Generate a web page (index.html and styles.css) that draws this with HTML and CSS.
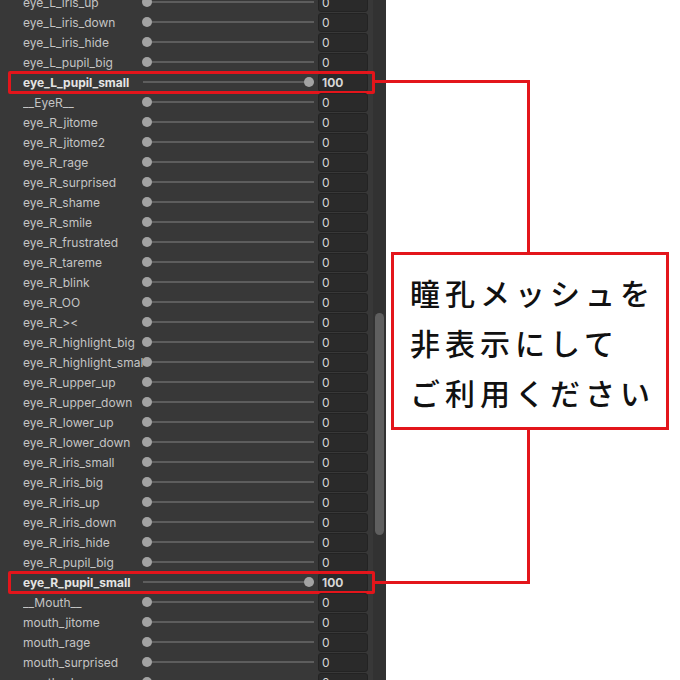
FILE: index.html
```html
<!DOCTYPE html>
<html lang="ja">
<head>
  <meta charset="UTF-8">
  <title>BlendShapes</title>
  <link rel="stylesheet" href="styles.css">
</head>
<body>
  <div class="page">
    <div class="panel">
      <div class="list" id="list"></div>
      <div class="scrollbar"><div class="thumb"></div></div>
    </div>
    <div class="blank"></div>
  </div>

  <div class="note">
    <div class="line line-top-h"></div>
    <div class="line line-top-v"></div>
    <div class="callout">瞳孔メッシュを<br>非表示にして<br>ご利用ください</div>
    <div class="line line-bot-v"></div>
    <div class="line line-bot-h"></div>
  </div>

  <script>
    const names = [
      'eye_L_iris_up', 'eye_L_iris_down', 'eye_L_iris_hide', 'eye_L_pupil_big', 'eye_L_pupil_small',
      '__EyeR__', 'eye_R_jitome', 'eye_R_jitome2', 'eye_R_rage', 'eye_R_surprised', 'eye_R_shame',
      'eye_R_smile', 'eye_R_frustrated', 'eye_R_tareme', 'eye_R_blink', 'eye_R_OO', 'eye_R_><',
      'eye_R_highlight_big', 'eye_R_highlight_small', 'eye_R_upper_up', 'eye_R_upper_down',
      'eye_R_lower_up', 'eye_R_lower_down', 'eye_R_iris_small', 'eye_R_iris_big', 'eye_R_iris_up',
      'eye_R_iris_down', 'eye_R_iris_hide', 'eye_R_pupil_big', 'eye_R_pupil_small',
      '__Mouth__', 'mouth_jitome', 'mouth_rage', 'mouth_surprised', 'mouth_shame'
    ];
    const marked = ['eye_L_pupil_small', 'eye_R_pupil_small'];
    const list = document.getElementById('list');

    names.forEach(name => {
      const on = marked.includes(name);
      const row = document.createElement('div');
      row.className = on ? 'row hl' : 'row';

      const label = document.createElement('span');
      label.className = 'label';
      label.textContent = name;

      const slider = document.createElement('div');
      slider.className = on ? 'slider max' : 'slider';
      slider.innerHTML = '<span class="knob"></span>';

      const field = document.createElement('div');
      field.className = 'field';
      field.textContent = on ? '100' : '0';

      row.append(label, slider, field);
      list.appendChild(row);
    });
  </script>
</body>
</html>
```

FILE: styles.css
```css
html, body {
  margin: 0;
  height: 680px;
  overflow: hidden;
  background: #ffffff;
  font-family: "Inter", "Noto Sans", sans-serif;
}

.page {
  display: flex;
  height: 680px;
}

.panel {
  display: flex;
  width: 386px;
  background: #383838;
  overflow: hidden;
}

.list {
  width: 373px;
  margin-top: -8px;
}

.row {
  position: relative;
  display: grid;
  grid-template-columns: 120px 171px 54px;
  align-items: center;
  height: 20px;
  padding-left: 23px;
  font-size: 12px;
  color: #c4c4c4;
}

.row.hl {
  font-weight: 700;
  color: #e4e4e4;
}

.row.hl::after {
  content: "";
  position: absolute;
  left: 8px;
  right: -2px;
  top: -1px;
  bottom: -2px;
  border: 3px solid #e3151b;
  border-radius: 2px;
}

.label {
  white-space: nowrap;
  overflow: hidden;
}

.slider {
  position: relative;
  height: 10px;
  display: flex;
  align-items: center;
}

.slider::before {
  content: "";
  flex: 1;
  height: 2px;
  background: #5d5d5d;
}

.knob {
  position: absolute;
  left: -1px;
  top: 0;
  width: 10px;
  height: 10px;
  border-radius: 50%;
  background: #a3a3a3;
}

.slider.max .knob {
  left: auto;
  right: 0;
}

.field {
  margin-left: 4px;
  height: 17px;
  line-height: 17px;
  padding-left: 3px;
  background: #2a2a2a;
  border: 1px solid #232323;
  border-radius: 3px;
  color: #d6d6d6;
  font-size: 12px;
}

.scrollbar {
  width: 13px;
  background: #323232;
  padding-top: 313px;
}

.thumb {
  width: 9px;
  margin-left: 2px;
  height: 222px;
  border-radius: 5px;
  background: #5f5f5f;
}

.blank {
  flex: 1;
}

/* annotation overlay */
.note .line {
  position: absolute;
  background: #e3151b;
}

.line-top-h {
  left: 375px;
  top: 80px;
  width: 155px;
  height: 3px;
}

.line-top-v {
  left: 527px;
  top: 80px;
  width: 3px;
  height: 173px;
}

.line-bot-v {
  left: 527px;
  top: 430px;
  width: 3px;
  height: 154px;
}

.line-bot-h {
  left: 375px;
  top: 581px;
  width: 155px;
  height: 3px;
}

.callout {
  position: absolute;
  left: 391px;
  top: 252px;
  width: 256px;
  padding: 12px 0 10px 16px;
  border: 3px solid #e3151b;
  background: #ffffff;
  font-family: "Noto Sans CJK JP", sans-serif;
  font-size: 30px;
  font-weight: 500;
  line-height: 50px;
  letter-spacing: 5px;
  color: #111111;
  white-space: nowrap;
}
```
